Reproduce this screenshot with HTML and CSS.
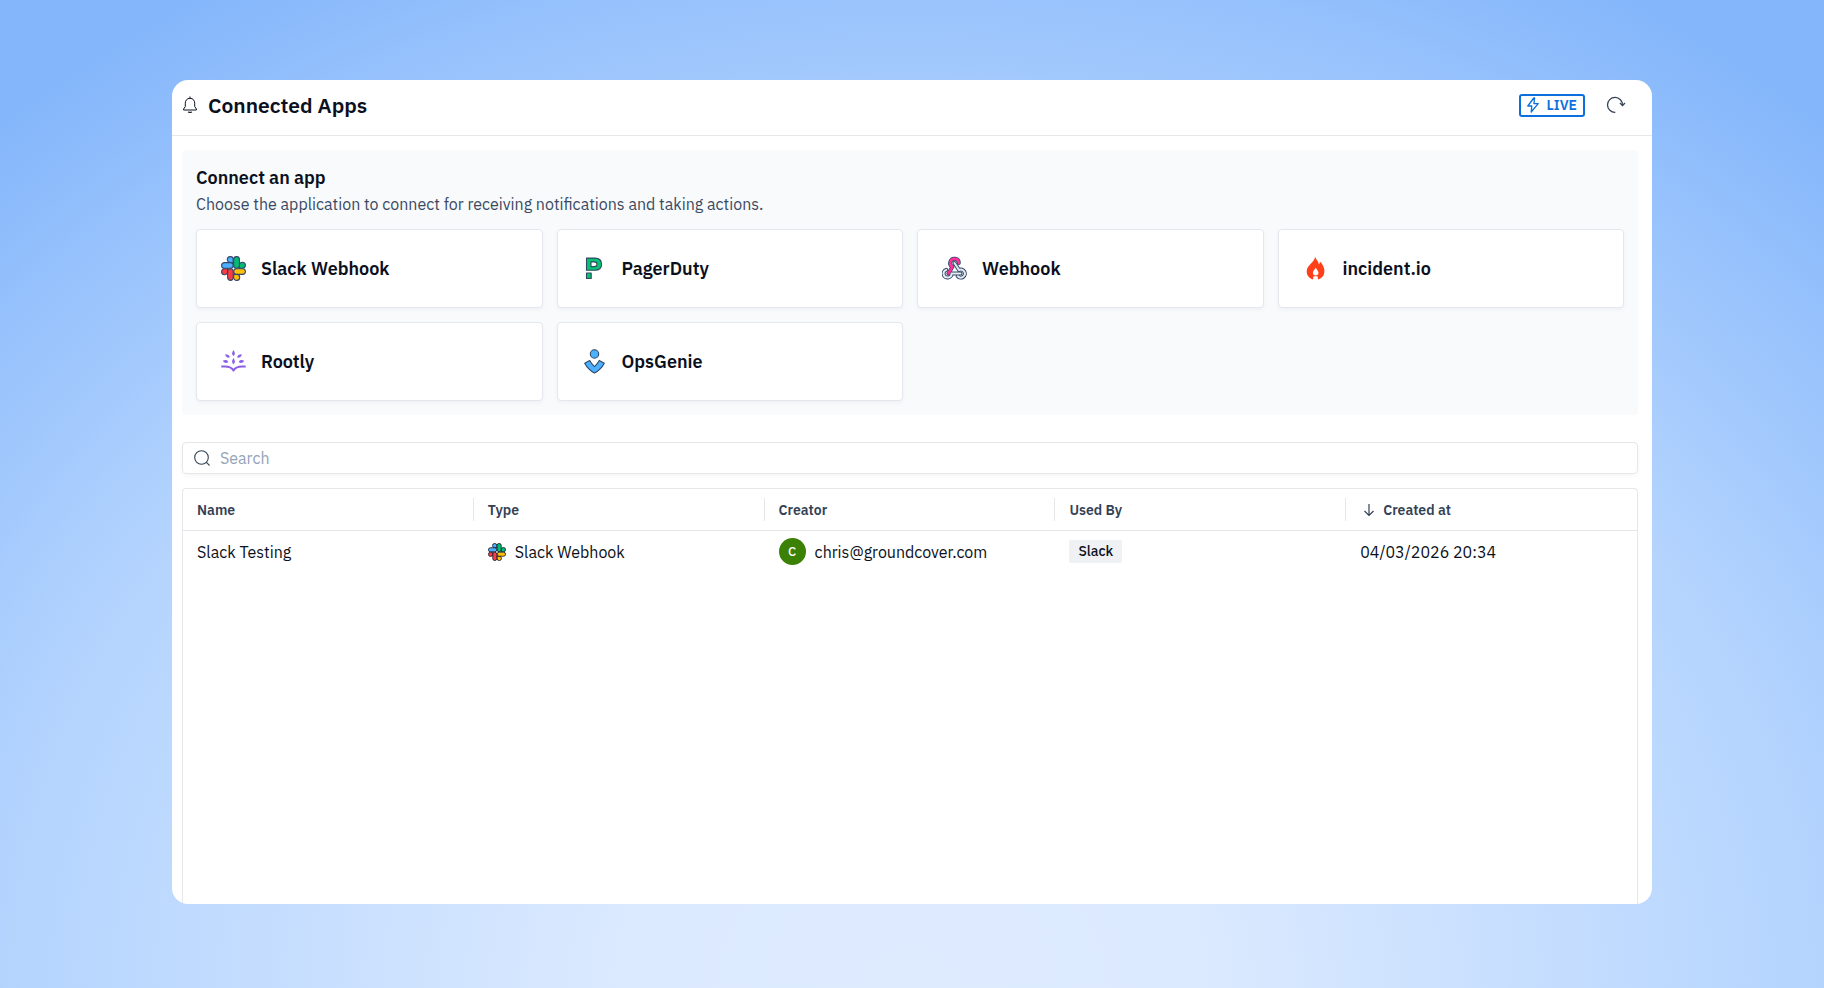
FILE: index.html
```html
<!DOCTYPE html>
<html lang="en">

<head>
    <meta charset="UTF-8">
    <meta name="viewport" content="width=device-width, initial-scale=1.0">
    <title>Connected Apps</title>
    <link rel="stylesheet" href="styles.css">
</head>

<body>
    <!-- shared logo, used in the card and in the table -->
    <svg class="defs" width="0" height="0" aria-hidden="true">
        <symbol id="slack-logo" viewBox="0 0 25 25">
            <g stroke="currentColor" stroke-width="1.1">
                <path fill="#4ab0ff" d="M9.3.6a2.9 2.9 0 0 1 2.9 2.9v3.1H9.3a2.9 2.9 0 0 1 0-6z" />
                <rect fill="#4ab0ff" x=".6" y="6.6" width="11.6" height="5.6" rx="2.8" />
                <path fill="#00bd75" d="M24.4 9.3a2.9 2.9 0 0 1-2.9 2.9h-3.1V9.3a3 3 0 0 1 6 0z" />
                <rect fill="#00bd75" x="12.7" y=".6" width="5.7" height="11.6" rx="2.8" />
                <path fill="#ffc107" d="M15.7 24.4a2.9 2.9 0 0 1-3-2.900v-3.100h3a3 3 0 0 1 0 6z" />
                <rect fill="#ffc107" x="12.7" y="12.8" width="11.7" height="5.6" rx="2.8" />
                <path fill="#ff3b43" d="M.6 15.700a2.900 2.900 0 0 1 2.900-2.900h3.100v2.900a3 3 0 0 1-6 0z" />
                <rect fill="#ff3b43" x="6.6" y="12.8" width="5.6" height="11.6" rx="2.8" />
            </g>
        </symbol>
    </svg>

    <main class="window">
        <header class="header">
            <svg class="bell" width="16" height="18" viewBox="0 0 16 18" fill="none" stroke="currentColor" stroke-linejoin="round">
                <path d="M8 .5v1.800M8 2.300c-3 0-4.700 2.200-4.700 4.900v3.300L1.600 13v1h12.800v-1l-1.700-2.500V7.200C12.700 4.500 11 2.300 8 2.300z" />
                <path d="M6.200 15.700c.5.900 3.100.900 3.600 0" stroke-width="1.300" />
            </svg>
            <h1>Connected Apps</h1>
            <button type="button" class="live-btn">
                <svg width="12" height="16" viewBox="0 0 12 16" fill="none" stroke="currentColor" stroke-width="1.300" stroke-linejoin="round">
                    <path d="M6.800 1L.8 9h4l-.6 6L11.200 6.600H6.900L7.600 1z" />
                </svg>
                LIVE
            </button>
            <button type="button" class="refresh-btn" aria-label="Refresh">
                <svg width="20" height="18" viewBox="0 0 20 18" fill="none" stroke="currentColor" stroke-width="1.300">
                    <path d="M9.300 16.400A7.500 7.500 0 1 1 16.500 9.200" />
                    <path d="M14 7l2.500 2.500L19 7" />
                </svg>
            </button>
        </header>

        <div class="content">
            <section class="connect">
                <h2>Connect an app</h2>
                <p>Choose the application to connect for receiving notifications and taking actions.</p>
                <div class="cards">
                    <button type="button" class="card">
                        <svg class="card-icon" viewBox="0 0 25 25"><use href="#slack-logo" /></svg>
                        Slack Webhook
                    </button>
                    <button type="button" class="card">
                        <svg class="card-icon" viewBox="0 0 25 25" fill="#06c270" stroke="currentColor" stroke-width="1.100" stroke-linejoin="round">
                            <path fill-rule="evenodd" d="M4.500 14.300V2.100h8.500c4.200 0 6.600 2.500 6.600 6.200s-2.600 6-6.600 6zM9 10.600h3.300c1.700 0 2.700-.8 2.700-2.300s-1-2.400-2.700-2.400H9z" />
                            <path d="M4.500 17h4.700v5.500H4.500z" />
                        </svg>
                        PagerDuty
                    </button>
                    <button type="button" class="card">
                        <svg class="card-icon" viewBox="0 0 25 25" fill="none" stroke-linecap="round" stroke-linejoin="round">
                            <g stroke="currentColor" stroke-width="4">
                                <path d="M4.200 13.850A4 4 0 1 0 9.600 17.600h8.900" />
                                <path d="M12.500 7l4.500 7a4 4 0 1 1-1.200 6.200" />
                                <path d="M16.800 7a4.300 4.300 0 1 0-6.400 3.800L6.500 17.500" />
                            </g>
                            <g stroke="#e4ebf2" stroke-width="2">
                                <path d="M4.200 13.850A4 4 0 1 0 9.600 17.600h8.900" />
                                <path d="M12.500 7l4.500 7a4 4 0 1 1-1.200 6.200" />
                            </g>
                            <path stroke="#ff2f9e" stroke-width="2.500" d="M16.800 7a4.300 4.300 0 1 0-6.400 3.800L6.500 17.500" />
                        </svg>
                        Webhook
                    </button>
                    <button type="button" class="card">
                        <svg class="card-icon" viewBox="0 0 25 25" fill="#ff4019">
                            <path fill-rule="evenodd" d="M12.300.8c.3 2.800 3.300 4 3.600 7.700.8-.7 1-1.900 1-2.900 2.800 2.600 4.500 6 4.500 9.600 0 4.400-2.700 7.200-6.200 8.200l-.7-3.200h-3.900l-.7 3.200c-3.600-1-6.200-3.900-6.200-8.100C3.700 9.500 11 6.700 12.300.8zM12.700 11.500c-.4 2-2.800 2.900-2.800 5.300 0 1.700 1.200 2.700 2.700 2.700s2.900-1 2.900-2.800c0-2.300-2.300-3.200-2.800-5.200z" />
                        </svg>
                        incident.io
                    </button>
                    <button type="button" class="card">
                        <svg class="card-icon" viewBox="0 0 25 25" fill="#8b60e8">
                            <path d="M12.500 1c1.900 2.800 1.900 4.400 0 6-1.900-1.600-1.900-3.200 0-6zM12.500 9c1.900 2.800 1.900 4.500 0 6.300-1.900-1.800-1.900-3.500 0-6.300z" />
                            <path d="M4 5.200c3.200 0 4.500.9 4.800 3.400C6.200 9 5 8 4 5.200zM21 5.200c-3.200 0-4.500.9-4.800 3.400 2.600.4 3.800-.6 4.800-3.400zM1.700 11.700c2.900-1.200 4.500-.8 5.600 1.300-2.100 1.600-3.700 1.100-5.600-1.300zM23.300 11.700c-2.900-1.200-4.500-.8-5.600 1.300 2.100 1.600 3.700 1.100 5.600-1.300z" />
                            <path fill="none" stroke="#8b60e8" stroke-width="2" stroke-linejoin="round" d="M.3 17.500h3.500c4 0 7 .9 8.700 4 1.700-3.100 4.700-4 8.700-4h3.500" />
                        </svg>
                        Rootly
                    </button>
                    <button type="button" class="card">
                        <svg class="card-icon" viewBox="0 0 25 25" fill="#4ab0ff" stroke="currentColor" stroke-width="1.100" stroke-linejoin="round">
                            <circle cx="12.500" cy="5" r="4.200" />
                            <path d="M2.700 14.200l5-2.600c1.200 2.300 2.900 4.400 4.800 6 1.900-1.600 3.600-3.700 4.800-6l5 2.600c-2.200 4.200-5.400 7.400-9.800 9.900-4.400-2.500-7.600-5.700-9.800-9.900z" />
                        </svg>
                        OpsGenie
                    </button>
                </div>
            </section>

            <label class="search">
                <svg width="16" height="16" viewBox="0 0 16 16" fill="none" stroke="currentColor" stroke-width="1.100">
                    <circle cx="7.500" cy="7.500" r="6.800" />
                    <path d="M12.200 12.200l3.300 3.300" />
                </svg>
                <input type="search" placeholder="Search" aria-label="Search">
            </label>

            <div class="table-wrap">
                <table>
                    <thead>
                        <tr>
                            <th><div class="th-cell">Name</div></th>
                            <th><div class="th-cell">Type</div></th>
                            <th><div class="th-cell">Creator</div></th>
                            <th><div class="th-cell">Used By</div></th>
                            <th aria-sort="descending">
                                <div class="th-cell">
                                    <svg class="sort-icon" width="18" height="14" viewBox="0 0 18 14" fill="none" stroke="currentColor" stroke-width="1.200">
                                        <path d="M9 1v11.500M4.500 8L9 12.500 13.500 8" />
                                    </svg>
                                    Created at
                                </div>
                            </th>
                        </tr>
                    </thead>
                    <tbody>
                        <tr>
                            <td>Slack Testing</td>
                            <td>
                                <div class="cell">
                                    <svg class="type-icon" viewBox="0 0 25 25"><use href="#slack-logo" /></svg>
                                    Slack Webhook
                                </div>
                            </td>
                            <td>
                                <div class="cell">
                                    <span class="avatar">C</span>
                                    chris@groundcover.com
                                </div>
                            </td>
                            <td><span class="tag">Slack</span></td>
                            <td>04/03/2026 20:34</td>
                        </tr>
                    </tbody>
                </table>
            </div>
        </div>
    </main>
</body>

</html>
```
FILE: styles.css
```css
* {
    box-sizing: border-box;
}

body {
    margin: 0;
    min-height: 100vh;
    padding: 80px 172px 84px;
    display: flex;
    font-family: "IBM Plex Sans", Roboto, sans-serif;
    font-size: 16px;
    color: #0b1020;
    background: radial-gradient(ellipse 75% 118% at 50% 100%, #deebff 0%, #dceaff 20%, #b4d4fe 66%, #84b6fb 100%);
}

button {
    font-family: inherit;
    cursor: pointer;
}

h1,
h2,
p {
    margin: 0;
}

.defs {
    position: absolute;
}

.window {
    flex: 1;
    min-width: 0;
    display: flex;
    flex-direction: column;
    background: #fff;
    border-radius: 16px;
    overflow: hidden;
}

.header {
    display: flex;
    align-items: center;
    height: 56px;
    padding: 0 26px 5px 10px;
    border-bottom: 1px solid #e5e7eb;
}

.header h1 {
    flex: 1;
    margin-left: 10px;
    font-size: 21px;
    font-weight: 600;
    line-height: 26px;
}

.live-btn {
    display: flex;
    align-items: center;
    gap: 7px;
    height: 23px;
    padding: 0 6px;
    border: 2px solid #0b70dd;
    border-radius: 3px;
    background: #fff;
    color: #0b70dd;
    font-size: 14px;
    font-weight: 600;
}

.refresh-btn {
    display: flex;
    margin-left: 21px;
    padding: 0;
    border: 0;
    background: none;
    color: #334155;
}

.content {
    flex: 1;
    display: flex;
    flex-direction: column;
    padding: 14px 14px 0 10px;
}

.connect {
    padding: 16px 14px 14px;
    border-radius: 4px;
    background: #f8fafc;
}

.connect h2 {
    font-size: 18px;
    font-weight: 600;
    line-height: 24px;
}

.connect p {
    margin: 2px 0 13px;
    line-height: 24px;
    color: #3b4a62;
}

.cards {
    display: grid;
    grid-template-columns: repeat(4, 1fr);
    gap: 14px;
}

.card {
    display: flex;
    align-items: center;
    gap: 15px;
    height: 79px;
    padding: 0 24px;
    border: 1px solid #e5e7ee;
    border-radius: 4px;
    background: #fff;
    color: #0b1020;
    font-size: 18px;
    font-weight: 600;
    box-shadow: 0 2px 4px rgba(15, 23, 42, 0.04);
}

.card-icon {
    width: 25px;
    height: 25px;
    color: #334766;
}

.search {
    display: flex;
    align-items: center;
    gap: 10px;
    height: 32px;
    margin: 27px 0 14px;
    padding: 0 11px;
    border: 1px solid #e5e7eb;
    border-radius: 4px;
    color: #334155;
    box-shadow: 0 2px 4px rgba(15, 23, 42, 0.04);
}

.search input {
    flex: 1;
    padding: 0;
    border: 0;
    outline: none;
    background: none;
    font: inherit;
}

.search input::placeholder {
    color: #94a3b8;
}

.table-wrap {
    flex: 1;
    border: 1px solid #e5e7eb;
    border-bottom: 0;
    border-radius: 4px 4px 0 0;
}

table {
    width: 100%;
    table-layout: fixed;
    border-collapse: collapse;
}

th {
    padding: 9px 0;
    border-bottom: 1px solid #e5e7eb;
    color: #334155;
    font-size: 14px;
    font-weight: 600;
}

.th-cell {
    display: flex;
    align-items: center;
    gap: 5px;
    height: 23px;
    padding-left: 14px;
    border-right: 1px solid #e5e7eb;
}

th:last-child .th-cell {
    border-right: 0;
}

td {
    height: 42px;
    padding: 0 14px;
}

.cell {
    display: flex;
    align-items: center;
    gap: 9px;
}

.type-icon {
    width: 18px;
    height: 18px;
    color: #0b1020;
}

.avatar {
    display: flex;
    align-items: center;
    justify-content: center;
    width: 27px;
    height: 27px;
    border-radius: 50%;
    background: #3a8106;
    color: #fff;
    font-size: 13px;
    font-weight: 500;
}

.tag {
    display: inline-block;
    padding: 0 9px;
    border-radius: 2px;
    background: #f0f1f5;
    font-size: 14px;
    font-weight: 500;
    line-height: 23px;
}
```
